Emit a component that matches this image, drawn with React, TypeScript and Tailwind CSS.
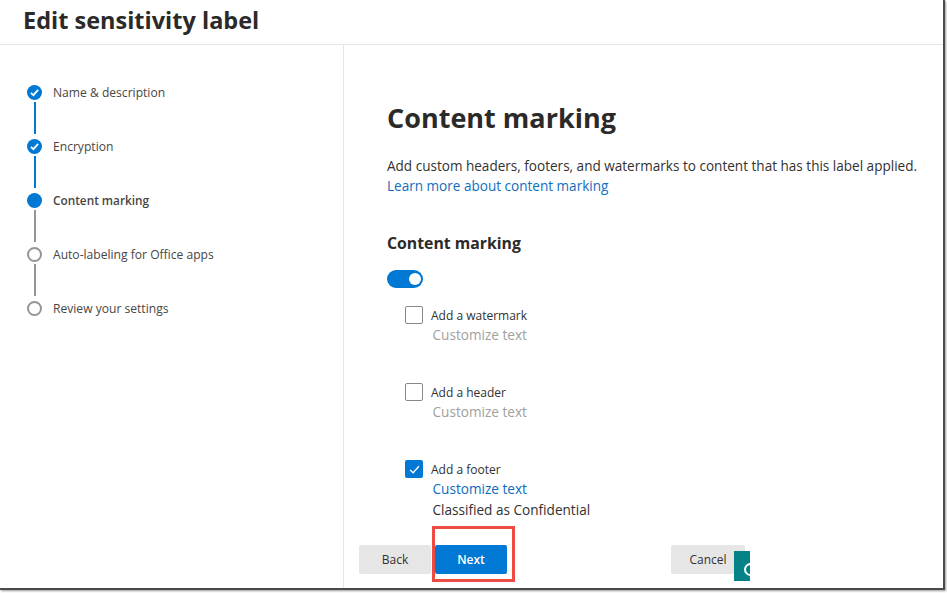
function Check({ size = 9, width = 2 }: { size?: number; width?: number }) {
  return (
    <svg width={size} height={size} viewBox="0 0 10 10" fill="none" stroke="white" strokeWidth={width}>
      <path d="M1 5.4 L3.8 8 L9 2" />
    </svg>
  );
}

function Step({ label, state, line }: { label: string; state: "done" | "current" | "todo"; line?: "blue" | "gray" }) {
  return (
    <div className="flex h-[54px] items-start">
      <div className="flex w-[15px] flex-col items-center">
        {state === "done" && (
          <div className="flex h-[15px] w-[15px] items-center justify-center rounded-full bg-[#0078d4]">
            <Check />
          </div>
        )}
        {state === "current" && <div className="h-[15px] w-[15px] rounded-full bg-[#0078d4]" />}
        {state === "todo" && <div className="h-[15px] w-[15px] rounded-full border-2 border-[#979593] bg-white" />}
        {line === "blue" && <div className="mt-[2px] h-[32px] w-[2px] bg-[#0078d4]" />}
        {line === "gray" && <div className="mt-[2px] h-[32px] w-[2px] bg-[#979593]" />}
      </div>
      <div className={`ml-[11px] leading-[15px] text-[#484644] ${state === "current" ? "text-[11.8px] font-semibold" : "text-[12.1px]"}`}>
        {label}
      </div>
    </div>
  );
}

function Option({ label, checked, link, extra, className }: { label: string; checked?: boolean; link?: boolean; extra?: string; className: string }) {
  return (
    <div className={className}>
      <div className="flex h-[19px] items-center">
        {checked ? (
          <div className="-mt-[1px] flex h-[18px] w-[18px] items-center justify-center rounded-[2px] bg-[#0078d4]">
            <Check size={11} width={1.2} />
          </div>
        ) : (
          <div className="-mt-[1px] h-[18px] w-[18px] rounded-[2px] border border-[#8a8886] bg-white" />
        )}
        <span className="ml-[8px] text-[12px] text-[#323130]">{label}</span>
      </div>
      <div className={`ml-[27.5px] h-[20px] text-[13.6px] leading-[20px] ${link ? "text-[#0b6cc0]" : "text-[#a19f9d]"}`}>Customize text</div>
      {extra && <div className="ml-[27.5px] mt-[1px] text-[13.6px] leading-[20px] text-[#323130]">{extra}</div>}
    </div>
  );
}

export default function App() {
  return (
    <div className="relative h-[593px] w-[947px] overflow-hidden bg-white font-['Open_Sans','Noto_Sans',sans-serif]">
      <div className="flex h-[590px] w-[945px] flex-col border-r-[2px] border-b-[2px] border-[#4a4a4a] shadow-[1px_1px_2px_rgba(0,0,0,0.4)]">
        <header className="h-[45px] shrink-0 border-b border-[#e6e6e6] pl-[23px]">
          <h1 className="text-[23.5px] font-bold leading-[41px] text-[#2b2a29]">Edit sensitivity label</h1>
        </header>
        <div className="flex min-h-0 flex-1">
          <aside className="w-[344px] shrink-0 border-r border-[#e6e6e6] pl-[27px] pt-[40px]">
            <Step label="Name & description" state="done" line="blue" />
            <Step label="Encryption" state="done" line="blue" />
            <Step label="Content marking" state="current" line="gray" />
            <Step label="Auto-labeling for Office apps" state="todo" line="gray" />
            <Step label="Review your settings" state="todo" />
          </aside>
          <main className="relative flex min-w-0 flex-1 flex-col pl-[43px]">
            <h2 className="mt-[52px] text-[27px] font-bold leading-[42px] text-[#2b2a29]">Content marking</h2>
            <p className="mt-[17px] whitespace-nowrap text-[13.55px] leading-[20px] text-[#323130]">
              Add custom headers, footers, and watermarks to content that has this label applied.
            </p>
            <a className="text-[13.55px] leading-[20px] text-[#106ebe]">Learn more about content marking</a>
            <h3 className="mt-[35px] text-[15.8px] font-bold leading-[24px] text-[#2b2a29]">Content marking</h3>
            <div className="mt-[15px] flex h-[18px] w-[36px] items-center justify-end rounded-full bg-[#0078d4] pr-[2px]">
              <div className="h-[12px] w-[12px] rounded-full bg-white" />
            </div>
            <div className="pl-[18px]">
              <Option className="mt-[18px]" label="Add a watermark" />
              <Option className="mt-[38px]" label="Add a header" />
              <Option className="mt-[38px]" label="Add a footer" checked link extra="Classified as Confidential" />
            </div>
            <div className="absolute left-[15px] top-[500px] h-[29px] w-[72px] rounded-[2px] bg-[#e6e6e6] text-center text-[12px] leading-[29px] text-[#323130]">Back</div>
            <div className="absolute left-[91px] top-[500px] h-[29px] w-[72px] rounded-[2px] bg-[#0078d4] text-center text-[12px] font-semibold leading-[29px] text-white">Next</div>
            <div className="absolute left-[88px] top-[481px] h-[56px] w-[83px] border-[3px] border-[#ee4b45]" />
            <div className="absolute left-[327px] top-[500px] h-[29px] w-[74px] rounded-[2px] bg-[#e6e6e6] text-center text-[12px] leading-[29px] text-[#323130]">Cancel</div>
            <div className="absolute left-[390px] top-[506px] h-[30px] w-[16px] overflow-hidden bg-[#038387]">
              <div className="absolute left-[10px] top-[12px] h-[13px] w-[13px] rounded-full border-2 border-white" />
            </div>
          </main>
        </div>
      </div>
    </div>
  );
}
